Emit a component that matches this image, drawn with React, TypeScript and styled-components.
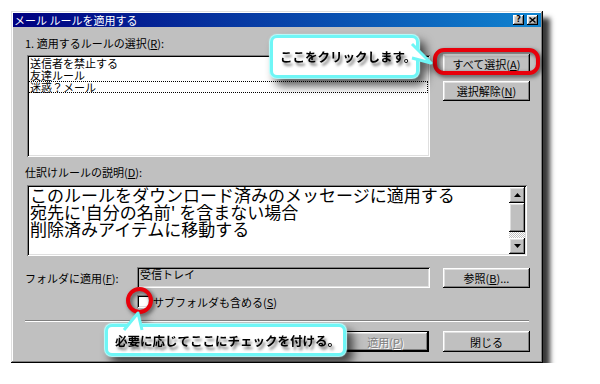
import React from "react";
import styled, { createGlobalStyle, css } from "styled-components";

const GlobalStyle = createGlobalStyle`
  html, body { margin: 0; padding: 0; background: #fff; }
  body { font-family: "Noto Sans CJK JP", "Noto Sans", sans-serif; }
`;

const raised = css`
  box-shadow: inset -1px -1px #000, inset 1px 1px #fff, inset -2px -2px #808080,
    inset 2px 2px #dfdfdf;
`;

const sunken = css`
  box-shadow: inset 1px 1px #808080, inset -1px -1px #fff, inset 2px 2px #000,
    inset -2px -2px #dfdfdf;
`;

const Page = styled.div`
  padding: 11px 0 0 11px;
`;

const Window = styled.div`
  position: relative;
  width: 532px;
  height: 352px;
  box-sizing: border-box;
  padding: 2px;
  background: #c0c0c0;
  box-shadow: inset -1px -1px #000, inset 1px 1px #dfdfdf, inset -2px -2px #808080,
    inset 2px 2px #fff, 7px 7px 5px rgba(0, 0, 0, 0.78);
`;

const TitleBar = styled.div`
  height: 14px;
  display: flex;
  align-items: center;
  justify-content: space-between;
  padding: 0 3px 0 1px;
  background: linear-gradient(to right, #000080, #1084d0);
  color: #fff;
  font-size: 11px;
  line-height: 14px;
`;

const TitleButtons = styled.div`
  display: flex;
  gap: 3px;
`;

const TitleButton = styled.div`
  width: 11px;
  height: 10px;
  background: #c0c0c0;
  ${raised};
  color: #000;
  font-family: "DejaVu Sans", sans-serif;
  font-size: 8px;
  font-weight: bold;
  line-height: 10px;
  display: flex;
  align-items: center;
  justify-content: center;
`;

const Body = styled.div`
  display: flex;
  flex-direction: column;
  padding: 10px 11px 0 11px;
  font-size: 11px;
  color: #000;
`;

const Label = styled.div<{ $mt?: number }>`
  height: 13px;
  line-height: 13px;
  padding-left: 1px;
  margin-top: ${(p) => p.$mt ?? 0}px;
  white-space: nowrap;
`;

const ListRow = styled.div`
  display: flex;
  margin-top: 5px;
  height: 102px;
`;

const ListBox = styled.div`
  width: 403px;
  height: 102px;
  margin-left: 3px;
  box-sizing: border-box;
  padding: 2px;
  background: #fff;
  ${sunken};
`;

const ListItem = styled.div<{ $focus?: boolean }>`
  height: 12px;
  line-height: 10px;
  padding-left: 1px;
  box-sizing: border-box;
  border: 1px dotted ${(p) => (p.$focus ? "#000" : "transparent")};
  border-left: none;
  border-right: ${(p) => (p.$focus ? "1px dotted #000" : "none")};
  white-space: nowrap;
`;

const ButtonColumn = styled.div`
  margin-left: auto;
  margin-top: -1px;
  display: flex;
  flex-direction: column;
  gap: 7px;
`;

const Button = styled.div<{ $default?: boolean; $disabled?: boolean; $h?: number }>`
  width: 87px;
  height: ${(p) => p.$h ?? 20}px;
  box-sizing: border-box;
  display: flex;
  align-items: center;
  justify-content: center;
  background: #c0c0c0;
  font-size: 11px;
  white-space: nowrap;
  ${(p) =>
    p.$default
      ? css`
          border: 1px solid #000;
          ${raised};
        `
      : raised};
  color: ${(p) => (p.$disabled ? "#808080" : "#000")};
  text-shadow: ${(p) => (p.$disabled ? "1px 1px 0 #fff" : "none")};
`;

const Highlight = styled.div`
  position: relative;
`;

const RedRing = styled.div`
  position: absolute;
  left: -10px;
  top: -6px;
  width: 107px;
  height: 27px;
  box-sizing: border-box;
  border: 4px solid #e8000b;
  border-radius: 11px;
  filter: drop-shadow(2px 2px 2px rgba(0, 0, 0, 0.6));
  pointer-events: none;
`;

const RedCircle = styled.div`
  position: absolute;
  left: -11px;
  top: -8px;
  width: 27px;
  height: 27px;
  box-sizing: border-box;
  border: 4px solid #e8000b;
  border-radius: 50%;
  filter: drop-shadow(2px 2px 2px rgba(0, 0, 0, 0.6));
  pointer-events: none;
`;

const Description = styled.div`
  display: flex;
  margin: 6px 0 0 3px;
  width: 500px;
  height: 71px;
  box-sizing: border-box;
  padding: 2px;
  background: #fff;
  ${sunken};
`;

const DescText = styled.div`
  flex: 1;
  padding-left: 1px;
  font-size: 17px;
  white-space: nowrap;
`;

const DescLine = styled.div`
  height: 17px;
  line-height: 16px;
`;

const ScrollBar = styled.div`
  width: 16px;
  display: flex;
  flex-direction: column;
`;

const ScrollArrow = styled.div`
  width: 16px;
  height: 16px;
  box-sizing: border-box;
  background: #c0c0c0;
  ${raised};
  display: flex;
  align-items: center;
  justify-content: center;
`;

const ScrollThumb = styled.div`
  height: 29px;
  background: #c0c0c0;
  ${raised};
`;

const ScrollTrack = styled.div`
  flex: 1;
  background-color: #fff;
  background-image: repeating-conic-gradient(#c0c0c0 0 25%, #fff 0 50%);
  background-size: 2px 2px;
`;

const FolderRow = styled.div`
  display: flex;
  align-items: center;
  margin-top: 11px;
  height: 21px;
`;

const FolderLabel = styled.div`
  width: 112px;
  padding-left: 1px;
  white-space: nowrap;
`;

const FolderField = styled.div`
  width: 293px;
  height: 21px;
  box-sizing: border-box;
  padding: 1px 3px;
  background: #c0c0c0;
  line-height: 13px;
  ${sunken};
`;

const BrowseSlot = styled.div`
  margin-left: auto;
`;

const CheckRow = styled.div`
  display: flex;
  align-items: center;
  gap: 3px;
  margin-top: 7px;
  padding-left: 113px;
  height: 13px;
`;

const CheckBox = styled.div`
  width: 13px;
  height: 13px;
  box-sizing: border-box;
  background: #fff;
  ${sunken};
`;

const Separator = styled.div`
  margin: 12px 0 0 1px;
  width: 504px;
  border-top: 1px solid #808080;
  border-bottom: 1px solid #fff;
`;

const BottomRow = styled.div`
  display: flex;
  justify-content: flex-end;
  gap: 14px;
  margin-top: 9px;
`;

const Callout = styled.div<{ $left: number; $top: number; $w: number; $h: number }>`
  position: absolute;
  left: ${(p) => p.$left}px;
  top: ${(p) => p.$top}px;
  width: ${(p) => p.$w}px;
  height: ${(p) => p.$h}px;
  filter: drop-shadow(6px 7px 5px rgba(0, 0, 0, 0.65));
`;

const CalloutBox = styled.div`
  position: relative;
  width: 100%;
  height: 100%;
  box-sizing: border-box;
  border: 3px solid #6ff6f6;
  border-radius: 7px;
  background: #fff;
  box-shadow: 0 0 1px 1px #b8ffff;
  display: flex;
  align-items: center;
  padding-left: 7px;
  font-size: 12.5px;
  font-weight: bold;
  color: #000;
  white-space: nowrap;
  text-shadow: 2px 3px 3px rgba(0, 0, 0, 0.6);
`;

const Tail = styled.svg`
  position: absolute;
  overflow: visible;
`;

const RightTail = styled(Tail)`
  left: calc(100% - 4px);
  top: 4px;
  width: 22px;
  height: 26px;
`;

const UpTail = styled(Tail)`
  left: 12px;
  top: -16px;
  width: 26px;
  height: 20px;
`;

const Arrow = ({ down }: { down?: boolean }) => (
  <svg width="7" height="4" viewBox="0 0 7 4">
    <polygon points={down ? "0,0 7,0 3.5,4" : "0,4 7,4 3.5,0"} fill="#000" />
  </svg>
);

export default function App() {
  return (
    <>
      <GlobalStyle />
      <Page>
        <Window>
          <TitleBar>
            <span>メール ルールを適用する</span>
            <TitleButtons>
              <TitleButton>?</TitleButton>
              <TitleButton>
                <svg width="7" height="6" viewBox="0 0 7 6">
                  <path d="M0.5 0.5 L6.5 5.5 M6.5 0.5 L0.5 5.5" stroke="#000" strokeWidth="1.4" />
                </svg>
              </TitleButton>
            </TitleButtons>
          </TitleBar>

          <Body>
            <Label>
              1. 適用するルールの選択(<u>R</u>):
            </Label>
            <ListRow>
              <ListBox>
                <ListItem>送信者を禁止する</ListItem>
                <ListItem>友達ルール</ListItem>
                <ListItem $focus>迷惑？メール</ListItem>
              </ListBox>
              <ButtonColumn>
                <Highlight>
                  <Button>
                    すべて選択(<u>A</u>)
                  </Button>
                  <RedRing />
                </Highlight>
                <Button>
                  選択解除(<u>N</u>)
                </Button>
              </ButtonColumn>
            </ListRow>

            <Label $mt={9}>
              仕訳けルールの説明(<u>D</u>):
            </Label>
            <Description>
              <DescText>
                <DescLine>このルールをダウンロード済みのメッセージに適用する</DescLine>
                <DescLine>宛先に'自分の名前' を含まない場合</DescLine>
                <DescLine>削除済みアイテムに移動する</DescLine>
              </DescText>
              <ScrollBar>
                <ScrollArrow>
                  <Arrow />
                </ScrollArrow>
                <ScrollThumb />
                <ScrollTrack />
                <ScrollArrow>
                  <Arrow down />
                </ScrollArrow>
              </ScrollBar>
            </Description>

            <FolderRow>
              <FolderLabel>
                フォルダに適用(<u>F</u>):
              </FolderLabel>
              <FolderField>受信トレイ</FolderField>
              <BrowseSlot>
                <Button>
                  参照(<u>B</u>)...
                </Button>
              </BrowseSlot>
            </FolderRow>

            <CheckRow>
              <Highlight>
                <CheckBox />
                <RedCircle />
              </Highlight>
              <span>
                サブフォルダも含める(<u>S</u>)
              </span>
            </CheckRow>

            <Separator />

            <BottomRow>
              <Button $default $disabled $h={21}>
                適用(<u>P</u>)
              </Button>
              <Button $h={21}>閉じる</Button>
            </BottomRow>
          </Body>

          <Callout $left={259} $top={24} $w={149} $h={43}>
            <CalloutBox>
              ここをクリックします。
              <RightTail viewBox="0 0 22 26">
                <polygon points="0,2 19,21 0,16" fill="#fff" />
                <polyline
                  points="0,2 19,21 0,16"
                  fill="none"
                  stroke="#6ff6f6"
                  strokeWidth="3"
                  strokeLinejoin="round"
                />
              </RightTail>
            </CalloutBox>
          </Callout>

          <Callout $left={94} $top={313} $w={241} $h={32}>
            <CalloutBox>
              必要に応じてここにチェックを付ける。
              <UpTail viewBox="0 0 26 20">
                <polygon points="4,19 18,2 22,19" fill="#fff" />
                <polyline
                  points="4,19 18,2 22,19"
                  fill="none"
                  stroke="#6ff6f6"
                  strokeWidth="3"
                  strokeLinejoin="round"
                />
              </UpTail>
            </CalloutBox>
          </Callout>
        </Window>
      </Page>
    </>
  );
}
